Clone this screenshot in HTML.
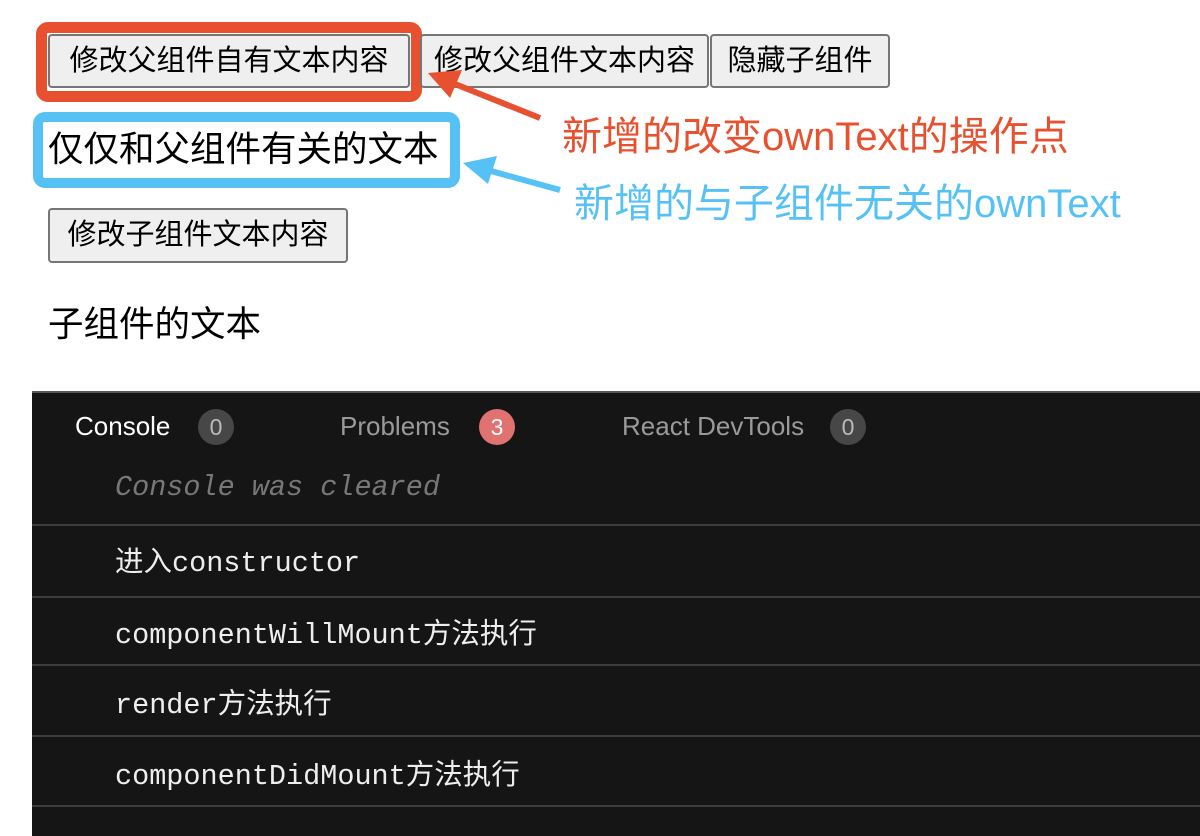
<!DOCTYPE html>
<html><head><meta charset="utf-8"><style>
*{margin:0;padding:0;box-sizing:border-box}
body{width:1200px;height:836px;overflow:hidden;background:#fff;position:relative;font-family:"Liberation Sans","Noto Sans CJK SC",sans-serif}
.a{position:absolute;white-space:nowrap}
.btn{position:absolute;background:#efefef;border:2px solid #767676;border-radius:4px;font-size:29px;line-height:50px;text-align:center;color:#000;white-space:nowrap}
.con{position:absolute;left:32px;top:391px;right:0;bottom:0;background:#151515;border-top:2px solid #555}
.tab{position:absolute;font-size:26px;top:18px;line-height:30px}
.bd{position:absolute;top:16px;width:36px;height:36px;border-radius:18px;font-size:23px;line-height:36px;text-align:center;color:#bbb;background:#474747}
.row{position:absolute;left:0;right:0;border-top:2px solid #3c3c3c}
.log{position:absolute;left:83px;font-family:"Liberation Mono","Noto Sans CJK SC",monospace;font-size:28.5px;color:#eee;white-space:nowrap}
</style></head><body>
<div class="a" style="left:36px;top:22px;width:386px;height:80px;border:11px solid #e8512f;border-radius:12px"></div>
<div class="btn" style="left:48px;top:34px;width:362px;height:54px">修改父组件自有文本内容</div>
<div class="btn" style="left:420px;top:34px;width:289px;height:54px">修改父组件文本内容</div>
<div class="btn" style="left:710px;top:34px;width:180px;height:54px">隐藏子组件</div>
<div class="a" style="left:33px;top:112px;width:427px;height:76px;border:10px solid #56c1f5;border-radius:12px"></div>
<div class="a" style="left:48px;top:127px;font-size:35.5px;line-height:44px">仅仅和父组件有关的文本</div>
<div class="btn" style="left:48px;top:208px;width:300px;height:55px">修改子组件文本内容</div>
<div class="a" style="left:48px;top:302px;font-size:35.5px;line-height:44px">子组件的文本</div>
<svg class="a" style="left:0;top:0" width="1200" height="391">
<line x1="540" y1="118" x2="445" y2="80" stroke="#e8512f" stroke-width="6"/>
<polygon points="428,73 462,70 450,98" fill="#e8512f"/>
<line x1="560" y1="190" x2="480" y2="168" stroke="#56c1f5" stroke-width="6"/>
<polygon points="463,163 497,156 488,184" fill="#56c1f5"/>
</svg>
<div class="a" style="left:562px;top:112px;font-size:40px;line-height:50px;color:#e8512f">新增的改变ownText的操作点</div>
<div class="a" style="left:574px;top:179px;font-size:40px;line-height:50px;color:#56c1f5">新增的与子组件无关的ownText</div>
<div class="con">
<div class="tab" style="left:43px;color:#fff">Console</div><div class="bd" style="left:166px">0</div>
<div class="tab" style="left:308px;color:#9a9a9a">Problems</div><div class="bd" style="left:447px;background:#e07272;color:#fff">3</div>
<div class="tab" style="left:590px;color:#9a9a9a">React DevTools</div><div class="bd" style="left:798px">0</div>
<div class="log" style="top:78px;color:#777;font-style:italic">Console was cleared</div>
<div class="row" style="top:131px"></div>
<div class="log" style="top:146px">进入constructor</div>
<div class="row" style="top:203px"></div>
<div class="log" style="top:218px">componentWillMount方法执行</div>
<div class="row" style="top:271px"></div>
<div class="log" style="top:288px">render方法执行</div>
<div class="row" style="top:342px"></div>
<div class="log" style="top:359px">componentDidMount方法执行</div>
<div class="row" style="top:412px"></div>
</div>
</body></html>
